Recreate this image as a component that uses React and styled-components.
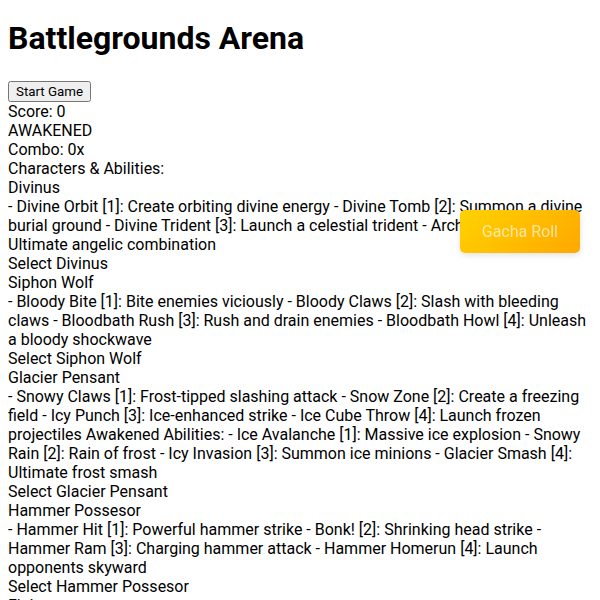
import React from "react";
import styled, { createGlobalStyle } from "styled-components";

const Global = createGlobalStyle`
  body {
    margin: 8px;
    font-family: Roboto, "Liberation Sans", sans-serif;
    font-size: 16px;
    color: #000;
    background: #fff;
  }
`;

const Title = styled.h1`
  font-size: 32px;
  font-weight: 700;
  margin: 11px 0 24px;
`;

const StartButton = styled.button`
  font-family: Roboto, "Liberation Sans", sans-serif;
  font-size: 13.33px;
  display: block;
`;

const Line = styled.div``;

const GachaButton = styled.button`
  position: fixed;
  top: 210px;
  right: 20px;
  padding: 12px 22px;
  font-family: Roboto, "Liberation Sans", sans-serif;
  font-size: 16px;
  line-height: 19px;
  color: rgba(255, 255, 255, 0.62);
  background: linear-gradient(135deg, #ffd200, #ffa800);
  border: none;
  border-radius: 5px;
  box-shadow: 0 2px 6px rgba(0, 0, 0, 0.12);
  cursor: pointer;
`;

const characters = [
  {
    name: "Divinus",
    desc: "- Divine Orbit [1]: Create orbiting divine energy - Divine Tomb [2]: Summon a divine burial ground - Divine Trident [3]: Launch a celestial trident - Archangel Strike [4]: Ultimate angelic combination",
  },
  {
    name: "Siphon Wolf",
    desc: "- Bloody Bite [1]: Bite enemies viciously - Bloody Claws [2]: Slash with bleeding claws - Bloodbath Rush [3]: Rush and drain enemies - Bloodbath Howl [4]: Unleash a bloody shockwave",
  },
  {
    name: "Glacier Pensant",
    desc: "- Snowy Claws [1]: Frost-tipped slashing attack - Snow Zone [2]: Create a freezing field - Icy Punch [3]: Ice-enhanced strike - Ice Cube Throw [4]: Launch frozen projectiles Awakened Abilities: - Ice Avalanche [1]: Massive ice explosion - Snowy Rain [2]: Rain of frost - Icy Invasion [3]: Summon ice minions - Glacier Smash [4]: Ultimate frost smash",
  },
  {
    name: "Hammer Possesor",
    desc: "- Hammer Hit [1]: Powerful hammer strike - Bonk! [2]: Shrinking head strike - Hammer Ram [3]: Charging hammer attack - Hammer Homerun [4]: Launch opponents skyward",
  },
  {
    name: "Fighter",
    desc: "- Punch [1]: Quick jab - Kick [2]: Strong kick",
  },
];

export default function App() {
  return (
    <>
      <Global />
      <Title>Battlegrounds Arena</Title>
      <StartButton>Start Game</StartButton>
      <Line>Score: 0</Line>
      <Line>AWAKENED</Line>
      <Line>Combo: 0x</Line>
      <Line>Characters &amp; Abilities:</Line>
      {characters.map((c) => (
        <div key={c.name}>
          <Line>{c.name}</Line>
          <Line>{c.desc}</Line>
          <Line>Select {c.name}</Line>
        </div>
      ))}
      <GachaButton>Gacha Roll</GachaButton>
    </>
  );
}
